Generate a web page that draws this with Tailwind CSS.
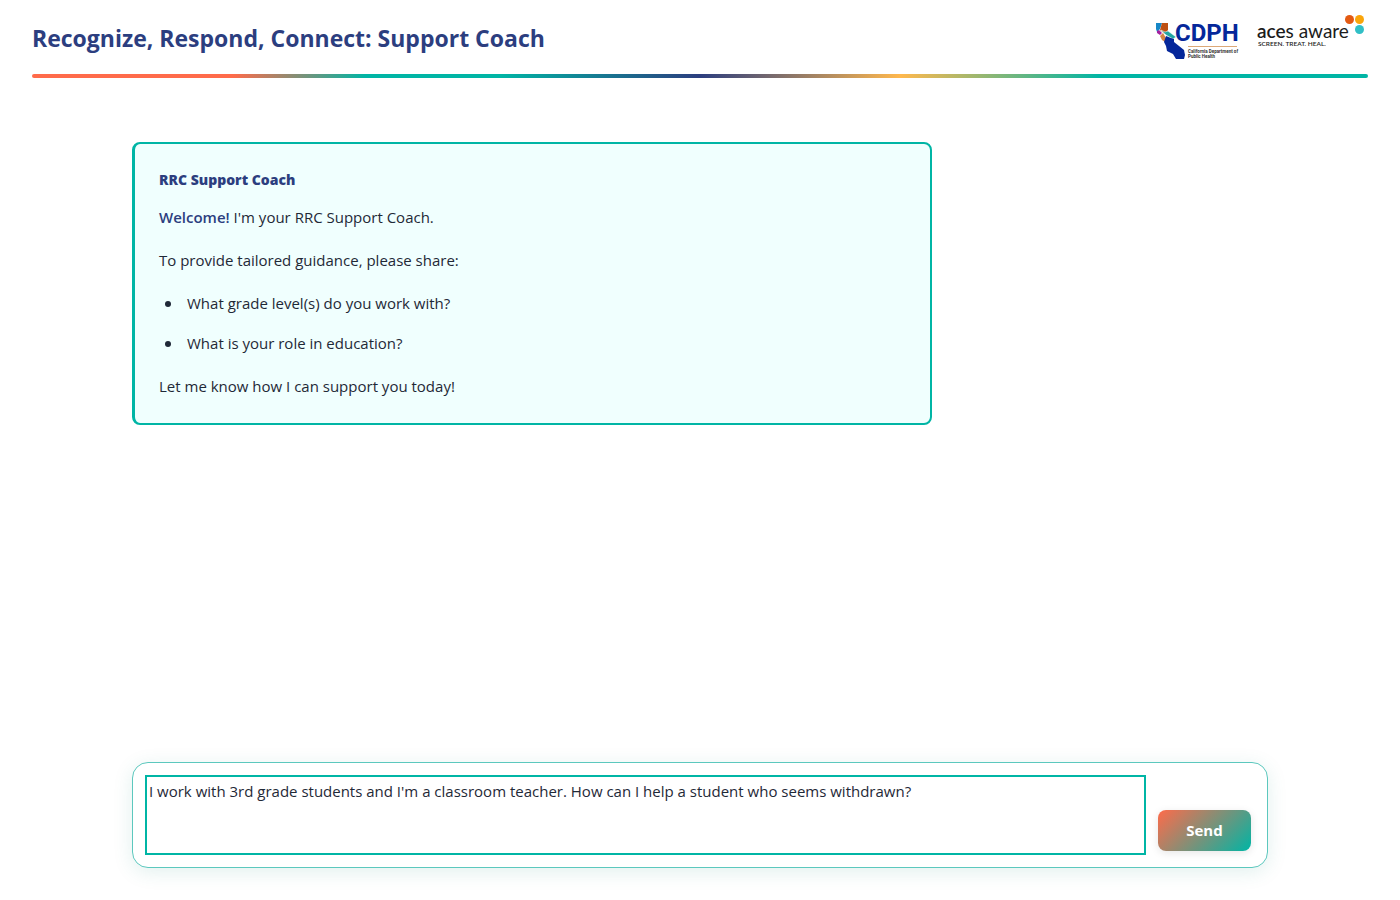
<!DOCTYPE html>
<html lang="en">
<head>
<meta charset="utf-8">
<meta name="viewport" content="width=device-width, initial-scale=1">
<title>Recognize, Respond, Connect: Support Coach</title>
<script src="https://cdn.jsdelivr.net/npm/@tailwindcss/browser@4"></script>
</head>
<body class="flex min-h-screen flex-col bg-white font-['Segoe_UI','Open_Sans',sans-serif] text-[15px] leading-[27px] text-[#1f2937]">
<header class="px-8">
  <div class="flex h-[74px] items-center justify-between">
    <h1 class="pt-0.5 text-[23px] font-bold leading-8 text-[#2c3e7f]">Recognize, Respond, Connect: Support Coach</h1>
    <div class="flex items-start">
      <svg class="h-[65px] w-[110px]" viewBox="0 0 110 65" role="img" aria-label="CDPH, California Department of Public Health">
        <path fill="#1687c7" d="M16 18h6l-2 6-3 3-1-3z"/>
        <path fill="#bd5013" d="M22 18h6v7l-3 4-5-4z"/>
        <path fill="#a320a0" d="M17 26l2-1 3 3-2 2-3-2z"/>
        <path fill="#d58343" d="M20 31l3-3 3 5-1 4-3-2z"/>
        <path fill="#20a5a2" stroke="#fff" stroke-width=".5" d="M21 25l4 2 3-1 8 6-3 2-7-4z"/>
        <path fill="#05279a" d="M26 31l5 2 3 1v3l10 8 1 5-1 4h-8l-3-5-6-3-1-5-2-4z"/>
        <text x="35" y="36" font-family="Roboto, sans-serif" font-weight="700" font-size="24" fill="#05279a">CDPH</text>
        <path stroke="#dca978" d="M48 41.500h49"/>
        <g font-family="Roboto, sans-serif" font-weight="700" font-size="4.500" fill="#333"><text x="48" y="48">California Department of</text><text x="48" y="53">Public Health</text></g>
      </svg>
      <svg class="h-[65px] w-[118px]" viewBox="0 0 118 65" role="img" aria-label="aces aware. Screen. Treat. Heal.">
        <g font-family="Lato, sans-serif" fill="#1c1c1c"><text x="7" y="33" font-size="19"><tspan font-weight="600">ace</tspan>s aware</text><text x="8" y="41" font-size="6.500" font-weight="600">SCREEN. TREAT. HEAL.</text></g>
        <circle cx="99.500" cy="14.500" r="4.500" fill="#e35a12"/><circle cx="109.500" cy="14.500" r="4.500" fill="#faa50a"/><circle cx="109.500" cy="24.500" r="4.500" fill="#31bfc6"/>
      </svg>
    </div>
  </div>
  <div class="h-1 rounded-sm bg-[linear-gradient(90deg,#ff6b4a_0%,#ff6b4a_15%,#00b5a5_25%,#00b5a5_35%,#2c3e7f_50%,#ffb84d_65%,#00b5a5_80%,#00b5a5_100%)]"></div>
</header>
<main class="mx-auto flex w-full max-w-[1200px] flex-1 flex-col justify-between px-8 pt-16 pb-8">
  <section class="w-full max-w-[800px] rounded-lg border-2 border-l-3 border-[#00b5a5] bg-[#f0fffe] px-6 pt-6 pb-[23px]">
    <h2 class="mb-3 text-[14px] leading-6 font-extrabold text-[#2c3e7f]">RRC Support Coach</h2>
    <p class="mb-4"><strong class="font-semibold text-[#2c3e7f]">Welcome!</strong> I'm your RRC Support Coach.</p>
    <p class="mb-4">To provide tailored guidance, please share:</p>
    <ul class="mb-4 space-y-[13px] pl-1.5">
      <li class="flex items-center gap-4 before:size-1.5 before:rounded-full before:bg-current">What grade level(s) do you work with?</li>
      <li class="flex items-center gap-4 before:size-1.5 before:rounded-full before:bg-current">What is your role in education?</li>
    </ul>
    <p>Let me know how I can support you today!</p>
  </section>
  <form class="flex items-end gap-3 rounded-2xl border border-[#5cc8be] bg-white p-3 shadow-[0_4px_20px_rgba(0,128,118,0.12)]">
    <textarea aria-label="Message" class="block h-20 min-w-0 flex-1 resize-none border-2 border-[#00b5a5] bg-white px-0.5 py-0.5 leading-6 outline-none">I work with 3rd grade students and I'm a classroom teacher. How can I help a student who seems withdrawn?</textarea>
    <button type="button" class="mr-1 mb-1 h-[41px] w-[93px] rounded-lg bg-[linear-gradient(135deg,#ff6b4a,#00b5a5)] text-[15px] font-bold text-white shadow-[0_2px_8px_rgba(0,0,0,0.1)]">Send</button>
  </form>
</main>
</body>
</html>
